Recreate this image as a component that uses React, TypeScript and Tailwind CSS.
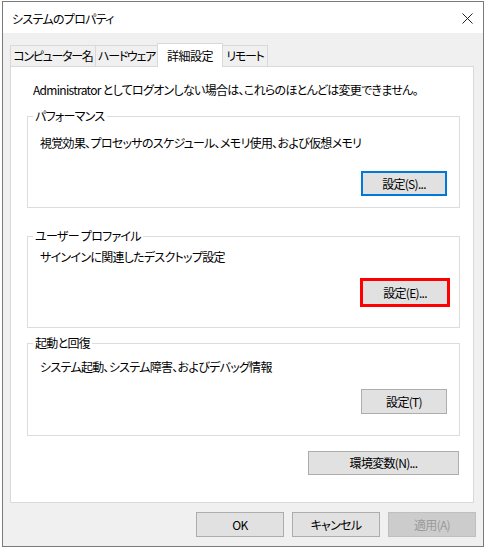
export default function App() {
  return (
    <div className="w-[488px] h-[548px] bg-white pt-[1px] pl-[2px] font-['Noto_Sans_CJK_JP','Noto_Sans',sans-serif] text-[12px] leading-[16px] tracking-[-0.7px] text-black [font-feature-settings:'palt']">
      <div className="w-[482px] h-[546px] border border-[#7a7a7a] flex flex-col">
        {/* title bar */}
        <div className="h-[31px] shrink-0 bg-white flex items-center justify-between pl-[9px] pr-[10px] pt-[2px]">
          <span>システムのプロパティ</span>
          <svg width="11" height="11" viewBox="0 0 11 11">
            <path d="M0.5 0.5 L10.5 10.5 M10.5 0.5 L0.5 10.5" stroke="#222" strokeWidth="1" fill="none" />
          </svg>
        </div>

        <div className="flex-1 bg-[#f0f0f0] pt-[10px] pl-[7px] flex flex-col">
          {/* tabs */}
          <div className="flex items-end h-[23px] relative z-10 whitespace-nowrap tracking-[-1.3px]">
            <div className="w-[86px] h-[21px] border border-b-0 border-[#d9d9d9] flex items-center justify-center">
              コンピューター名
            </div>
            <div className="w-[63px] h-[21px] -ml-px border border-b-0 border-[#d9d9d9] flex items-center justify-center">
              ハードウェア
            </div>
            <div className="w-[66px] h-[24px] -ml-px -mb-px bg-white border border-b-0 border-[#d9d9d9] flex items-center justify-center tracking-[-0.5px]">
              詳細設定
            </div>
            <div className="w-[46px] h-[21px] -ml-px border border-b-0 border-[#d9d9d9] flex items-center justify-center">
              リモート
            </div>
          </div>

          {/* panel */}
          <div className="w-[464px] h-[437px] bg-white border border-[#d9d9d9] flex flex-col">
            <p className="ml-[22px] mt-[15px]">
              Administrator としてログオンしない場合は、これらのほとんどは変更できません。
            </p>

            <fieldset className="ml-[16px] mt-[10px] w-[433px] border border-[#dcdcdc]">
              <legend className="ml-[5px] px-[2px]">パフォーマンス</legend>
              <div className="flex flex-col pb-[11px]">
                <p className="ml-[12px] mt-[11px]">視覚効果、プロセッサのスケジュール、メモリ使用、および仮想メモリ</p>
                <button className="self-end mr-[12px] mt-[20px] w-[86px] h-[25px] bg-[#e1e1e1] border-2 border-[#0078d7] flex items-center justify-center">
                  設定(S)...
                </button>
              </div>
            </fieldset>

            <fieldset className="ml-[16px] mt-[20px] w-[433px] border border-[#dcdcdc]">
              <legend className="ml-[5px] px-[2px]">ユーザー プロファイル</legend>
              <div className="flex flex-col pb-[20px]">
                <p className="ml-[12px] mt-[5px]">サインインに関連したデスクトップ設定</p>
                <div className="self-end mr-[9px] mt-[13px] w-[90px] h-[29px] border-[3px] border-[#ff0000] flex">
                  <button className="flex-1 bg-[#e1e1e1] flex items-center justify-center">設定(E)...</button>
                </div>
              </div>
            </fieldset>

            <fieldset className="ml-[16px] mt-[7px] w-[433px] border border-[#dcdcdc]">
              <legend className="ml-[5px] px-[2px]">起動と回復</legend>
              <div className="flex flex-col pb-[21px]">
                <p className="ml-[12px] mt-[8px]">システム起動、システム障害、およびデバッグ情報</p>
                <button className="self-end mr-[12px] mt-[14px] w-[86px] h-[25px] bg-[#e1e1e1] border border-[#adadad] flex items-center justify-center">
                  設定(T)
                </button>
              </div>
            </fieldset>

            <button className="self-end mr-[14px] mt-[15px] w-[151px] h-[24px] bg-[#e1e1e1] border border-[#adadad] flex items-center justify-center">
              環境変数(N)...
            </button>
          </div>

          {/* dialog buttons */}
          <div className="flex justify-end gap-[8px] pr-[7px] mt-[9px]">
            <button className="w-[88px] h-[25px] bg-[#e1e1e1] border border-[#adadad] flex items-center justify-center">OK</button>
            <button className="w-[88px] h-[25px] bg-[#e1e1e1] border border-[#adadad] flex items-center justify-center">キャンセル</button>
            <button className="w-[88px] h-[25px] bg-[#cccccc] border border-[#bfbfbf] text-[#9a9a9a] flex items-center justify-center">適用(A)</button>
          </div>
        </div>
      </div>
    </div>
  );
}
